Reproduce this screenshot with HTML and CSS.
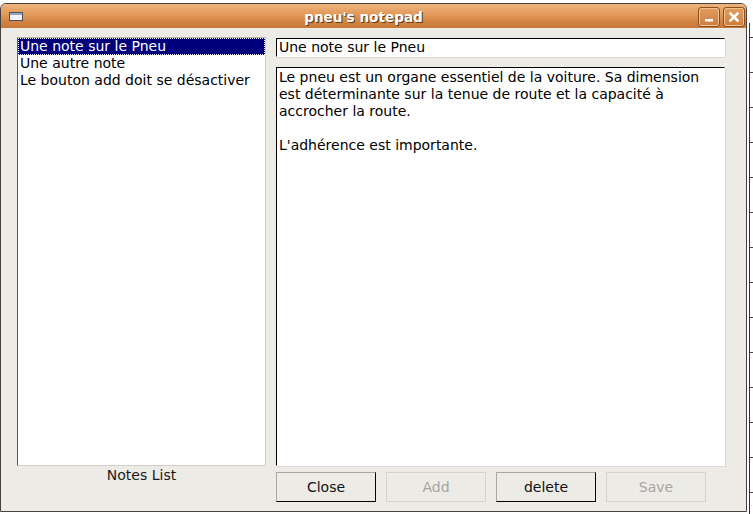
FILE: index.html
```html
<!DOCTYPE html>
<html>
<head>
<meta charset="utf-8">
<title>pneu's notepad</title>
<link rel="stylesheet" href="styles.css">
</head>
<body>
<div class="screen">
  <div class="window">
    <div class="titlebar">
      <span class="app-icon"><span class="app-icon-bar"></span></span>
      <span class="title">pneu's notepad</span>
      <div class="wm-buttons">
        <span class="wm">
          <svg width="12" height="12" viewBox="0 0 12 12"><rect x="2" y="8" width="8" height="2.5" fill="#fff"/></svg>
        </span>
        <span class="wm">
          <svg width="12" height="12" viewBox="0 0 12 12"><path d="M2.5 2.5 L9.5 9.5 M9.5 2.5 L2.5 9.5" stroke="#fff" stroke-width="2.6" stroke-linecap="square"/></svg>
        </span>
      </div>
    </div>
    <div class="client">
      <div class="left">
        <ul class="list">
          <li class="selected">Une note sur le Pneu</li>
          <li>Une autre note</li>
          <li>Le bouton add doit se désactiver</li>
        </ul>
        <div class="label">Notes List</div>
      </div>
      <div class="right">
        <div class="field">Une note sur le Pneu</div>
        <div class="area">Le pneu est un organe essentiel de la voiture. Sa dimension
est déterminante sur la tenue de route et la capacité à
accrocher la route.

L'adhérence est importante.</div>
        <div class="buttons">
          <span class="btn">Close</span>
          <span class="btn disabled">Add</span>
          <span class="btn">delete</span>
          <span class="btn disabled">Save</span>
        </div>
      </div>
    </div>
  </div>
  <div class="behind"></div>
</div>
</body>
</html>
```

FILE: styles.css
```css
html, body {
  margin: 0;
  padding: 0;
  background: #ffffff;
  font-family: "DejaVu Sans", sans-serif;
  font-size: 14px;
  color: #000;
}

.screen {
  width: 753px;
  height: 514px;
  display: flex;
  overflow: hidden;
  position: relative;
}

.behind {
  flex: 1;
  margin-top: 23px;
  border-left: 1px solid #333;
  margin-left: 2px;
  background:
    repeating-linear-gradient(to bottom, transparent 0, transparent 34px, #444 34px, #444 35px);
  background-position: 0 -20px;
}

.window {
  width: 747px;
  height: 509px;
  margin-top: 3px;
  box-sizing: border-box;
  border: 1px solid #45413d;
  border-radius: 6px 6px 0 0;
  display: flex;
  flex-direction: column;
  background: #edebe6;
  overflow: hidden;
}

.titlebar {
  height: 24px;
  flex: none;
  display: flex;
  align-items: center;
  background: linear-gradient(to bottom, #eeb47e 0%, #e19858 45%, #d38545 70%, #c87736 100%);
}

.app-icon {
  width: 12px;
  height: 7px;
  margin-left: 8px;
  border: 1px solid #4f4f57;
  background: #f2f2f8;
  display: flex;
  flex-direction: column;
}

.app-icon-bar {
  height: 2px;
  background: #9ba6c2;
}

.title {
  flex: 1;
  text-align: center;
  font-weight: bold;
  font-size: 13.6px;
  color: #ffffff;
  text-shadow: 1px 1px 0 #5e3a16;
  padding-top: 1px;
  padding-left: 6px;
}

.wm-buttons {
  display: flex;
  gap: 3px;
  margin-right: 1px;
  margin-top: 1px;
}

.wm {
  width: 20px;
  height: 18px;
  border: 1px solid #8a4e1e;
  border-radius: 3px;
  box-shadow: inset 0 0 0 1px #f1c394;
  background: linear-gradient(to bottom, #e39c5d, #cd7e3f);
  display: flex;
  align-items: center;
  justify-content: center;
}

.client {
  flex: 1;
  display: flex;
  gap: 10px;
  padding: 9px 0 0 16px;
}

.left {
  width: 249px;
  display: flex;
  flex-direction: column;
}

.list {
  margin: 0;
  padding: 0;
  list-style: none;
  height: 429px;
  box-sizing: border-box;
  background: #fff;
  border: 1px solid #d2cec9;
  border-left-color: #5c5955;
  border-top-color: #b9b5b0;
}

.list li {
  height: 17px;
  line-height: 17px;
  padding-left: 2px;
  white-space: nowrap;
}

.list li.selected {
  background: #00007c;
  color: #fff;
  outline: 1px dotted #e8e8ff;
  outline-offset: -1px;
}

.label {
  text-align: center;
  line-height: 17px;
  margin-top: 1px;
  color: #1a1a1a;
}

.right {
  width: 449px;
  display: flex;
  flex-direction: column;
  padding-top: 1px;
}

.field {
  height: 19px;
  box-sizing: border-box;
  background: #fff;
  border: 1px solid #fff;
  border-top-color: #000;
  border-left-color: #000;
  box-shadow: 1px 1px 0 #dcd8d3;
  line-height: 17px;
  padding-left: 2px;
  white-space: nowrap;
}

.area {
  margin-top: 10px;
  height: 399px;
  box-sizing: border-box;
  background: #fff;
  border: 1px solid #fff;
  border-top-color: #000;
  border-left-color: #000;
  box-shadow: 1px 1px 0 #dcd8d3;
  line-height: 17px;
  padding: 1px 2px;
  white-space: pre-line;
}

.buttons {
  margin-top: 6px;
  display: flex;
  gap: 10px;
}

.btn {
  width: 100px;
  height: 30px;
  box-sizing: border-box;
  display: flex;
  align-items: center;
  justify-content: center;
  border: 1px solid #000;
  border-top-color: #a9a5a0;
  border-left-color: #a9a5a0;
  background: #edebe6;
  color: #111;
}

.btn.disabled {
  border-color: #d6d2cd;
  color: #a8a5a1;
}
```
